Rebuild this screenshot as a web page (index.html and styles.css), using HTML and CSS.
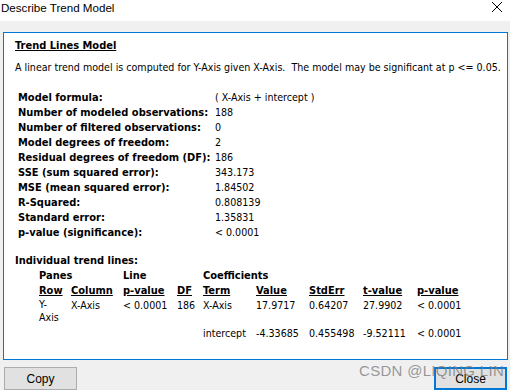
FILE: index.html
```html
<!DOCTYPE html>
<html>
<head>
<meta charset="utf-8">
<link rel="stylesheet" href="styles.css">
</head>
<body>
<div class="window">
  <div class="titlebar">
    <span class="title">Describe Trend Model</span>
    <svg class="close-x" width="12" height="12" viewBox="0 0 12 12"><path d="M1 1L11 11M11 1L1 11" stroke="#000" stroke-width="1"/></svg>
  </div>
  <div class="body">
    <div class="panel">
      <div class="heading">Trend Lines Model</div>
      <div class="desc">A linear trend model is computed for Y-Axis given X-Axis.&nbsp; The model may be significant at p &lt;= 0.05.</div>
      <div class="stats">
        <div class="lbl">Model formula:</div><div class="val">( X-Axis + intercept )</div>
        <div class="lbl">Number of modeled observations:</div><div class="val">188</div>
        <div class="lbl">Number of filtered observations:</div><div class="val">0</div>
        <div class="lbl">Model degrees of freedom:</div><div class="val">2</div>
        <div class="lbl">Residual degrees of freedom (DF):</div><div class="val">186</div>
        <div class="lbl">SSE (sum squared error):</div><div class="val">343.173</div>
        <div class="lbl">MSE (mean squared error):</div><div class="val">1.84502</div>
        <div class="lbl">R-Squared:</div><div class="val">0.808139</div>
        <div class="lbl">Standard error:</div><div class="val">1.35831</div>
        <div class="lbl">p-value (significance):</div><div class="val">&lt; 0.0001</div>
      </div>
      <div class="subhead">Individual trend lines:</div>
      <div class="trend">
        <div class="grp span2">Panes</div>
        <div class="grp span2">Line</div>
        <div class="grp span5">Coefficients</div>
        <div class="th">Row</div>
        <div class="th">Column</div>
        <div class="th">p-value</div>
        <div class="th">DF</div>
        <div class="th">Term</div>
        <div class="th">Value</div>
        <div class="th">StdErr</div>
        <div class="th">t-value</div>
        <div class="th">p-value</div>
        <div class="td wrap">Y-Axis</div>
        <div class="td">X-Axis</div>
        <div class="td">&lt; 0.0001</div>
        <div class="td">186</div>
        <div class="td">X-Axis</div>
        <div class="td">17.9717</div>
        <div class="td">0.64207</div>
        <div class="td">27.9902</div>
        <div class="td">&lt; 0.0001</div>
        <div class="td"></div>
        <div class="td"></div>
        <div class="td"></div>
        <div class="td"></div>
        <div class="td">intercept</div>
        <div class="td">-4.33685</div>
        <div class="td">0.455498</div>
        <div class="td">-9.52111</div>
        <div class="td">&lt; 0.0001</div>
      </div>
    </div>
    <div class="buttons">
      <button class="btn">Copy</button>
      <button class="btn primary">Close</button>
    </div>
    <div class="watermark">CSDN @LIQING LIN</div>
  </div>
</div>
</body>
</html>
```
FILE: styles.css
```css
* { box-sizing: border-box; }
html, body { margin: 0; padding: 0; }
body {
  width: 510px;
  height: 390px;
  overflow: hidden;
  background: #f0f0f0;
}
.window { width: 510px; height: 390px; display: flex; flex-direction: column; }
.titlebar {
  height: 22px;
  background: #fff;
  display: flex;
  align-items: center;
  justify-content: space-between;
  padding: 0 7px 0 1px;
}
.title {
  font-family: "Liberation Sans", Arial, sans-serif;
  font-size: 11.6px;
  color: #000;
  margin-top: -6px;
}
.close-x { margin-top: -7px; }
.body {
  position: relative;
  flex: 1;
  padding: 11px 2px 0 3px;
}
.panel {
  height: 328px;
  background: #fff;
  border: 1px solid #0078d7;
  padding: 6px 0 0 11px;
  font-family: "DejaVu Sans Condensed", "DejaVu Sans", sans-serif;
  font-size: 10.6px;
  color: #000;
}
.heading {
  font-weight: bold;
  text-decoration: underline;
  line-height: 13px;
  font-size: 11px;
}
.desc { margin-top: 9px; line-height: 13px; }
.stats {
  margin-top: 16px;
  margin-left: 3px;
  display: grid;
  grid-template-columns: 197px auto;
  line-height: 15px;
}
.lbl { font-weight: bold; font-size: 11px; }
.subhead { margin-top: 13px; font-weight: bold; font-size: 11px; line-height: 15px; }
.trend {
  margin-left: 24px;
  display: grid;
  grid-template-columns: 32px 52px 54px 26px 53px 53px 54px 54px auto;
  line-height: 15px;
}
.grp { font-weight: bold; font-size: 11px; }
.span2 { grid-column: span 2; }
.span5 { grid-column: span 5; }
.th { font-weight: bold; font-size: 11px; text-decoration: underline; }
.td { white-space: nowrap; }
.td.wrap { white-space: normal; width: 20px; line-height: 13px; height: 28px; }
.buttons {
  display: flex;
  justify-content: space-between;
  padding: 7px 1px 0 1px;
}
.btn {
  width: 73px;
  height: 23px;
  background: #e1e1e1;
  border: 1px solid #adadad;
  font-family: "Liberation Sans", Arial, sans-serif;
  font-size: 12px;
  color: #000;
  padding: 0;
}
.btn.primary { border: 2px solid #0078d7; }
.watermark {
  position: absolute;
  left: 359px;
  top: 341px;
  font-family: "Liberation Sans", Arial, sans-serif;
  font-size: 15px;
  color: rgba(120, 120, 120, 0.75);
  letter-spacing: 0.3px;
  pointer-events: none;
}
```
